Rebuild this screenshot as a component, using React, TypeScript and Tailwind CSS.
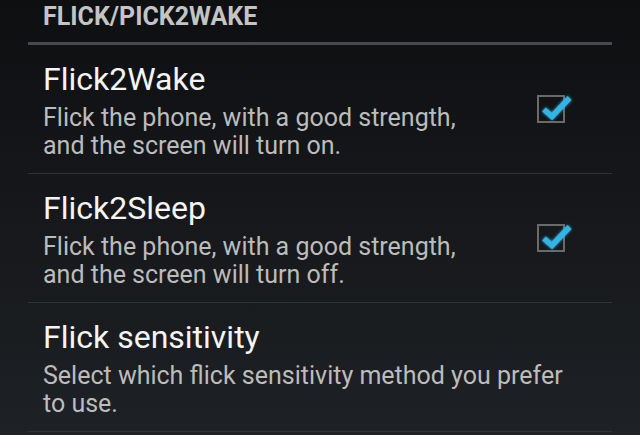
import React from "react";

function Check() {
  return (
    <div className="relative w-[28px] h-[28px] border-2 border-[#6a6a6a] shrink-0">
      <svg
        className="absolute left-[-2px] top-[-2px] overflow-visible"
        width="40"
        height="32"
        viewBox="0 0 40 32"
      >
        <defs>
          <filter id="glow" x="-50%" y="-50%" width="200%" height="200%">
            <feGaussianBlur stdDeviation="1.8" result="b" />
            <feMerge>
              <feMergeNode in="b" />
              <feMergeNode in="SourceGraphic" />
            </feMerge>
          </filter>
        </defs>
        <polyline
          points="7,14.5 15,21.5 32.5,3"
          fill="none"
          stroke="#33b5e5"
          strokeWidth="5.5"
          strokeLinecap="butt"
          strokeLinejoin="miter"
          filter="url(#glow)"
        />
      </svg>
    </div>
  );
}

function Item({
  title,
  summary,
  checked,
}: {
  title: string;
  summary: string[];
  checked?: boolean;
}) {
  return (
    <div className="flex items-center h-[129px] border-b border-[#2f3236]">
      <div className="flex-1 pl-[15px] self-start pt-[16px]">
        <div className="text-[32px] leading-[36px] text-[#f4f4f4]">{title}</div>
        <div className="mt-[6.5px] text-[25px] leading-[28.5px] text-[#bcbcbc]">
          {summary.map((s, i) => (
            <div key={i}>{s}</div>
          ))}
        </div>
      </div>
      {checked && (
        <div className="mr-[47px]">
          <Check />
        </div>
      )}
    </div>
  );
}

export default function App() {
  return (
    <div className="w-[640px] h-[435px] overflow-hidden bg-gradient-to-b from-[#0e0f11] to-[#1e2125] font-['Roboto',sans-serif]">
      <div className="mx-[28px]">
        <div className="h-[45px] border-b-[3px] border-[#48494c] pl-[15px] pt-[3px]">
          <div className="text-[25px] leading-[28px] font-bold text-[#c4c4c4]">
            FLICK/PICK2WAKE
          </div>
        </div>
        <Item
          title="Flick2Wake"
          summary={["Flick the phone, with a good strength,", "and the screen will turn on."]}
          checked
        />
        <Item
          title="Flick2Sleep"
          summary={["Flick the phone, with a good strength,", "and the screen will turn off."]}
          checked
        />
        <Item
          title="Flick sensitivity"
          summary={["Select which flick sensitivity method you prefer", "to use."]}
        />
      </div>
    </div>
  );
}
